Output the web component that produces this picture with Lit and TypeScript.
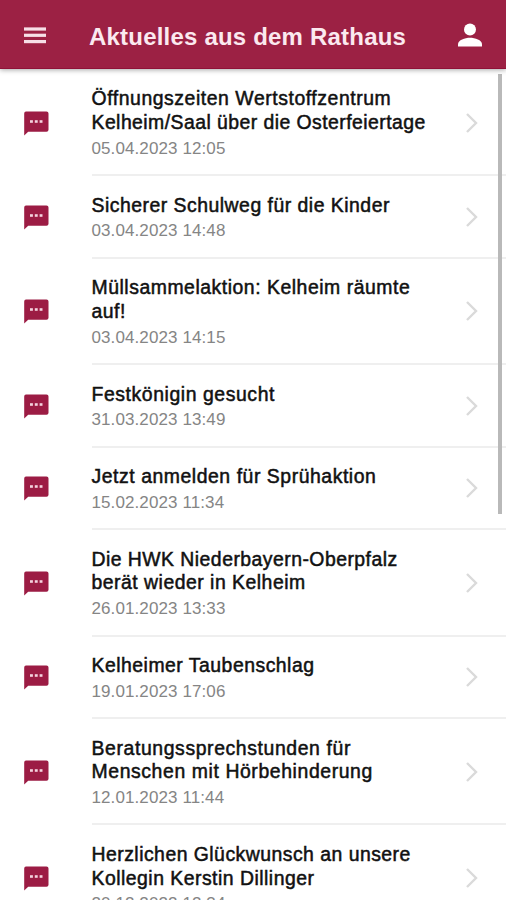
import { LitElement, html, css, svg } from "lit";
import { customElement, property } from "lit/decorators.js";

interface News {
  lines: [string, number][];
  date: string;
}

// Each heading line carries its own tracking in px.
const NEWS: News[] = [
  { lines: [["Öffnungszeiten Wertstoffzentrum", 0.56], ["Kelheim/Saal über die Osterfeiertage", 0.45]], date: "05.04.2023 12:05" },
  { lines: [["Sicherer Schulweg für die Kinder", 0.5]], date: "03.04.2023 14:48" },
  { lines: [["Müllsammelaktion: Kelheim räumte", 0.53], ["auf!", 0.5]], date: "03.04.2023 14:15" },
  { lines: [["Festkönigin gesucht", 0.58]], date: "31.03.2023 13:49" },
  { lines: [["Jetzt anmelden für Sprühaktion", 0.55]], date: "15.02.2023 11:34" },
  { lines: [["Die HWK Niederbayern-Oberpfalz", 0.47], ["berät wieder in Kelheim", 0.5]], date: "26.01.2023 13:33" },
  { lines: [["Kelheimer Taubenschlag", 0.5]], date: "19.01.2023 17:06" },
  { lines: [["Beratungssprechstunden für", 0.61], ["Menschen mit Hörbehinderung", 0.6]], date: "12.01.2023 11:44" },
  { lines: [["Herzlichen Glückwunsch an unsere", 0.48], ["Kollegin Kerstin Dillinger", 0.49]], date: "20.12.2022 12:34" },
];

@customElement("news-row")
class NewsRow extends LitElement {
  @property({ attribute: false }) item!: News;

  static styles = css`
    :host { display: flex; flex: none; align-items: stretch; padding-left: 24px; }
    .bubble { flex: none; width: 25px; height: 25px; align-self: center; margin-right: 42.5px; }
    .body {
      flex: 1; display: flex; align-items: center; justify-content: space-between;
      box-sizing: border-box; border-bottom: 2px solid #efefef;
    }
    .text { padding: 17.5px 0 12.4px; white-space: nowrap; }
    .line {
      font-size: 19.4px; line-height: 23.7px; color: #111;
      -webkit-text-stroke: 0.5px #111;
    }
    .date { font-size: 17px; line-height: 27px; color: #858585; letter-spacing: 0.1px; }
    .chevron { flex: none; width: 14px; height: 22px; margin: 1px 27px 0 0; }
  `;

  render() {
    return html`
      <svg class="bubble" viewBox="0 0 25 25">
        <path d="M2 .5h20.5a2 2 0 0 1 2 2v16.2a2 2 0 0 1-2 2H4.2L.2 24.6V2.5a2 2 0 0 1 1.8-2z" fill="#9c1c44" />
        ${[6, 10.8, 15.6].map((x) => svg`<rect x=${x} y="9.2" width="2.9" height="2.6" fill="#f3d3de" />`)}
      </svg>
      <div class="body">
        <div class="text">
          ${this.item.lines.map(([t, s]) => html`<div class="line" style="letter-spacing:${s}px">${t}</div>`)}
          <div class="date">${this.item.date}</div>
        </div>
        <svg class="chevron" viewBox="0 0 14 22" fill="none" stroke="#dadada" stroke-width="2.4">
          <path d="M2 2l9 9-9 9" />
        </svg>
      </div>
    `;
  }
}

@customElement("app-root")
class AppRoot extends LitElement {
  static styles = css`
    :host {
      display: flex; flex-direction: column; position: relative; height: 900px; overflow: hidden;
      background: #fff; font-family: "Liberation Sans", Arial, sans-serif;
    }
    .bar {
      flex: none; height: 69px; box-sizing: border-box; display: flex; align-items: center;
      padding: 3px 24px 0 24px; background: #9c2144; border-bottom: 1px solid #8f1238;
      box-shadow: 0 1px 5px rgba(0, 0, 0, 0.35); z-index: 1;
    }
    .menu { width: 22px; height: 18px; margin-right: 43px; }
    .title {
      flex: 1; margin: 0; font-size: 24px; line-height: 30px; font-weight: 700; color: #fbe9ef;
      letter-spacing: 0.2px; white-space: nowrap; padding-top: 2px;
    }
    .user { width: 24px; height: 24px; margin-bottom: 1px; }
    .list { flex: 1; display: flex; flex-direction: column; overflow: hidden; padding-top: 0.9px; }
    .thumb { position: absolute; right: 4px; top: 74px; width: 4px; height: 440px; background: #b9b9b9; }
  `;

  render() {
    return html`
      <header class="bar">
        <svg class="menu" viewBox="0 0 22 18" fill="#f7dfe7">
          <rect y="0.4" width="22" height="3.2" /><rect y="6.7" width="22" height="3.2" /><rect y="13" width="22" height="3.2" />
        </svg>
        <h1 class="title">Aktuelles aus dem Rathaus</h1>
        <svg class="user" viewBox="0 0 24 24" fill="#fff">
          <circle cx="12" cy="6.6" r="6" />
          <path d="M0 23.6v-2.4c0-4 7-6.4 12-6.4s12 2.4 12 6.4v2.4z" />
        </svg>
      </header>
      <main class="list">${NEWS.map((n) => html`<news-row .item=${n}></news-row>`)}</main>
      <div class="thumb"></div>
    `;
  }
}
